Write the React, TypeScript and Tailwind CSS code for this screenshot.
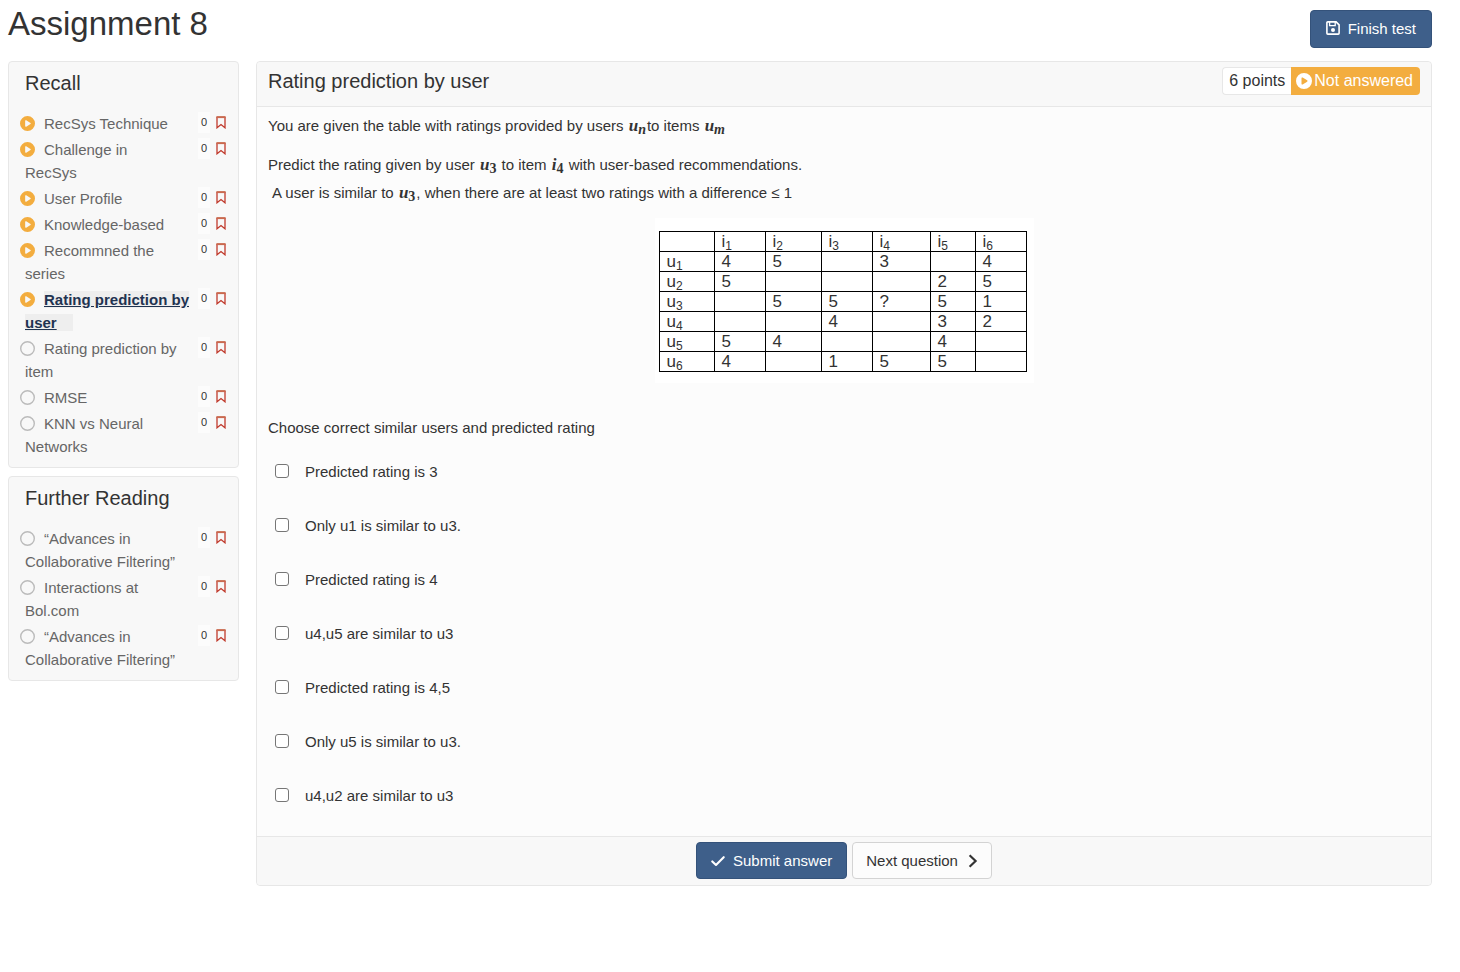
import React from "react";
import { FaCirclePlay, FaRegCircle } from "react-icons/fa6";

type Question = { title: string; started?: boolean; current?: boolean };

const recall: Question[] = [
  { title: "RecSys Technique", started: true },
  { title: "Challenge in RecSys", started: true },
  { title: "User Profile", started: true },
  { title: "Knowledge-based", started: true },
  { title: "Recommned the series", started: true },
  { title: "Rating prediction by user", started: true, current: true },
  { title: "Rating prediction by item" },
  { title: "RMSE" },
  { title: "KNN vs Neural Networks" },
];

const reading: Question[] = [
  { title: "“Advances in Collaborative Filtering”" },
  { title: "Interactions at Bol.com" },
  { title: "“Advances in Collaborative Filtering”" },
];

const ratings = [
  ["4", "5", "", "3", "", "4"],
  ["5", "", "", "", "2", "5"],
  ["", "5", "5", "?", "5", "1"],
  ["", "", "4", "", "3", "2"],
  ["5", "4", "", "", "4", ""],
  ["4", "", "1", "5", "5", ""],
];

const answers = [
  "Predicted rating is 3",
  "Only u1 is similar to u3.",
  "Predicted rating is 4",
  "u4,u5 are similar to u3",
  "Predicted rating is 4,5",
  "Only u5 is similar to u3.",
  "u4,u2 are similar to u3",
];

function SaveIcon() {
  return (
    <svg viewBox="0 0 14 14" className="size-[14px]" fill="none" stroke="currentColor" strokeWidth="1.6" aria-hidden="true">
      <path d="M1.8 .9h8.3l3 3v8.3a.9.9 0 0 1-.9.9H1.8a.9.9 0 0 1-.9-.9V1.8a.9.9 0 0 1 .9-.9z" />
      <path d="M3.6 1v3.6h5.6V1" strokeWidth="1.3" />
      <circle cx="7" cy="8.9" r="2" fill="currentColor" stroke="none" />
    </svg>
  );
}

function CheckIcon() {
  return (
    <svg viewBox="0 0 14 12" className="h-3 w-[14px]" fill="none" stroke="currentColor" strokeWidth="2.1" strokeLinecap="round" strokeLinejoin="round" aria-hidden="true">
      <path d="M1.3 6.4 5 10l7.7-7.8" />
    </svg>
  );
}

function BookmarkIcon() {
  return (
    <svg viewBox="0 0 10 13" className="h-[13px] w-[10px]" fill="none" aria-hidden="true">
      <path d="M1 1v10.8l4-3.2 4 3.2V1" stroke="#c0392b" strokeWidth="1.3" />
      <path d="M.4 1.1h9.2" stroke="#c9694f" strokeWidth="2" />
    </svg>
  );
}

function ChevronIcon() {
  return (
    <svg viewBox="0 0 10 14" className="h-[14px] w-[10px]" fill="none" stroke="currentColor" strokeWidth="2.2" aria-hidden="true">
      <path d="M1.6 1.2 7.6 7l-6 5.8" />
    </svg>
  );
}

function Section({ title, items }: { title: string; items: Question[] }) {
  return (
    <section className="rounded border border-[#e7e7e7] bg-[#f8f8f8] pt-2 pb-[6px]">
      <h2 className="pl-4 text-[20px] leading-[26px]">{title}</h2>
      <ul className="mt-4 text-[15px] leading-[23px] text-[#666]">
        {items.map((q, i) => (
          <li key={i} className="flex items-start pr-[9px] pb-[3px] pl-4">
            <a
              href={`#${title}-${i}`}
              className={q.current ? "-ml-[5px] w-[173px] pl-[5px] font-bold text-[#1f3351]" : "-ml-[5px] w-[163px] pl-[5px]"}
            >
              {q.started ? (
                <FaCirclePlay className="-mt-1 mr-[9px] -ml-[5px] inline-block size-[15px] text-[#f3ad3f]" />
              ) : (
                <FaRegCircle className="-mt-1 mr-[9px] -ml-[5px] inline-block size-[15px] text-[#bbb]" />
              )}
              <span className={q.current ? "bg-[#eee] pr-4 underline" : ""}>{q.title}</span>
            </a>
            <span className="ml-auto flex items-center gap-[3px]">
              <span className="w-3 bg-[#fcfcfc] text-center text-[11px] leading-[21px] text-[#333]">0</span>
              <button aria-label="Bookmark" className="flex w-4 justify-center">
                <BookmarkIcon />
              </button>
            </span>
          </li>
        ))}
      </ul>
    </section>
  );
}

function Sym({ v, s }: { v: string; s: React.ReactNode }) {
  return (
    <span className="px-px font-['Liberation_Serif',serif] text-[17px] leading-none font-bold italic">
      {v}
      <sub className="bottom-[-3px] text-[14px]">{s}</sub>
    </span>
  );
}

export default function App() {
  return (
    <div className="bg-white pr-7 pl-2 font-['Liberation_Sans',Arial,sans-serif] text-[15px] leading-[23px] text-[#333]">
      <header className="flex items-start justify-between">
        <h1 className="pt-[5px] text-[33px] leading-[38px]">Assignment 8</h1>
        <button className="mt-[10px] flex h-[38px] items-center gap-2 rounded border border-[#34527a] bg-[#3e5f8a] px-[15px] pb-[2px] text-white">
          <SaveIcon />
          Finish test
        </button>
      </header>

      <div className="mt-[13px] flex items-start gap-[17px]">
        <nav className="flex w-[231px] shrink-0 flex-col gap-2">
          <Section title="Recall" items={recall} />
          <Section title="Further Reading" items={reading} />
        </nav>

        <main className="min-w-0 flex-1 rounded border border-[#e7e7e7] bg-[#fcfcfc]">
          <div className="flex h-[45px] items-start justify-between rounded-t border-b border-[#e7e7e7] bg-[#f8f8f8] pt-[5px] pr-[11px] pl-[11px]">
            <h2 className="pt-px text-[20px] leading-[26px]">Rating prediction by user</h2>
            <div className="flex h-7 items-stretch text-[16px] leading-[28px]">
              <span className="flex items-center rounded-l border border-r-0 border-[#e7e7e7] bg-white px-[6px]">6 points</span>
              <span className="flex items-center gap-[2px] rounded-r bg-[#f3ad3f] pr-[7px] pl-[5px] text-white">
                <FaCirclePlay className="size-4" />
                Not answered
              </span>
            </div>
          </div>

          <div className="px-[11px] pt-[7px] pb-[14px]">
            <p className="mb-4">
              You are given the table with ratings provided by users <Sym v="u" s="n" />to items <Sym v="u" s="m" />
            </p>
            <p>
              Predict the rating given by user <Sym v="u" s={<span className="not-italic">3</span>} /> to item{" "}
              <Sym v="i" s={<span className="not-italic">4</span>} /> with user-based recommendations.
            </p>
            <p className="mt-[5px] pl-1">
              A user is similar to <Sym v="u" s={<span className="not-italic">3</span>} />, when there are at least two
              ratings with a difference ≤ 1
            </p>

            <div className="mx-auto mt-[14px] w-[379px] bg-white px-1 pt-[13px] pb-[11px]">
              <table className="w-[367px] table-fixed border-collapse text-[17px] leading-[19px] text-[#333]">
                <colgroup>
                  <col className="w-[55px]" />
                  <col className="w-[51px]" />
                  <col className="w-[56px]" />
                  <col className="w-[51px]" />
                  <col className="w-[58px]" />
                  <col className="w-[45px]" />
                  <col className="w-[51px]" />
                </colgroup>
                <thead>
                  <tr className="h-5">
                    <td className="border border-black" />
                    {[1, 2, 3, 4, 5, 6].map((n) => (
                      <th key={n} scope="col" className="border border-black p-0 pl-[7px] text-left font-normal">
                        i<sub className="bottom-[-3px] text-[12px]">{n}</sub>
                      </th>
                    ))}
                  </tr>
                </thead>
                <tbody>
                  {ratings.map((row, i) => (
                    <tr key={i} className="h-5">
                      <th scope="row" className="border border-black p-0 pl-[7px] text-left font-normal">
                        u<sub className="bottom-[-3px] text-[12px]">{i + 1}</sub>
                      </th>
                      {row.map((v, j) => (
                        <td key={j} className="border border-black p-0 pl-[7px]">
                          {v}
                        </td>
                      ))}
                    </tr>
                  ))}
                </tbody>
              </table>
            </div>

            <p className="mt-[33px]">Choose correct similar users and predicted rating</p>

            <div className="mt-[5px]">
              {answers.map((a) => (
                <label key={a} className="flex h-[54px] items-center gap-4 pl-[7px]">
                  <input
                    type="checkbox"
                    className="size-[14px] appearance-none rounded-[3px] border border-[#767676] bg-white checked:bg-[#3e5f8a]"
                  />
                  {a}
                </label>
              ))}
            </div>
          </div>

          <div className="flex items-start justify-center gap-[5px] rounded-b border-t border-[#e7e7e7] bg-[#f8f8f8] pt-[5px] pb-[6px]">
            <button className="flex h-[37px] items-center gap-2 rounded border border-[#34527a] bg-[#3e5f8a] px-[14px] text-white">
              <CheckIcon />
              Submit answer
            </button>
            <button className="flex h-[37px] items-center gap-[10px] rounded border border-[#d3d3d3] bg-[#fcfcfc] px-[13px]">
              Next question
              <ChevronIcon />
            </button>
          </div>
        </main>
      </div>
    </div>
  );
}
